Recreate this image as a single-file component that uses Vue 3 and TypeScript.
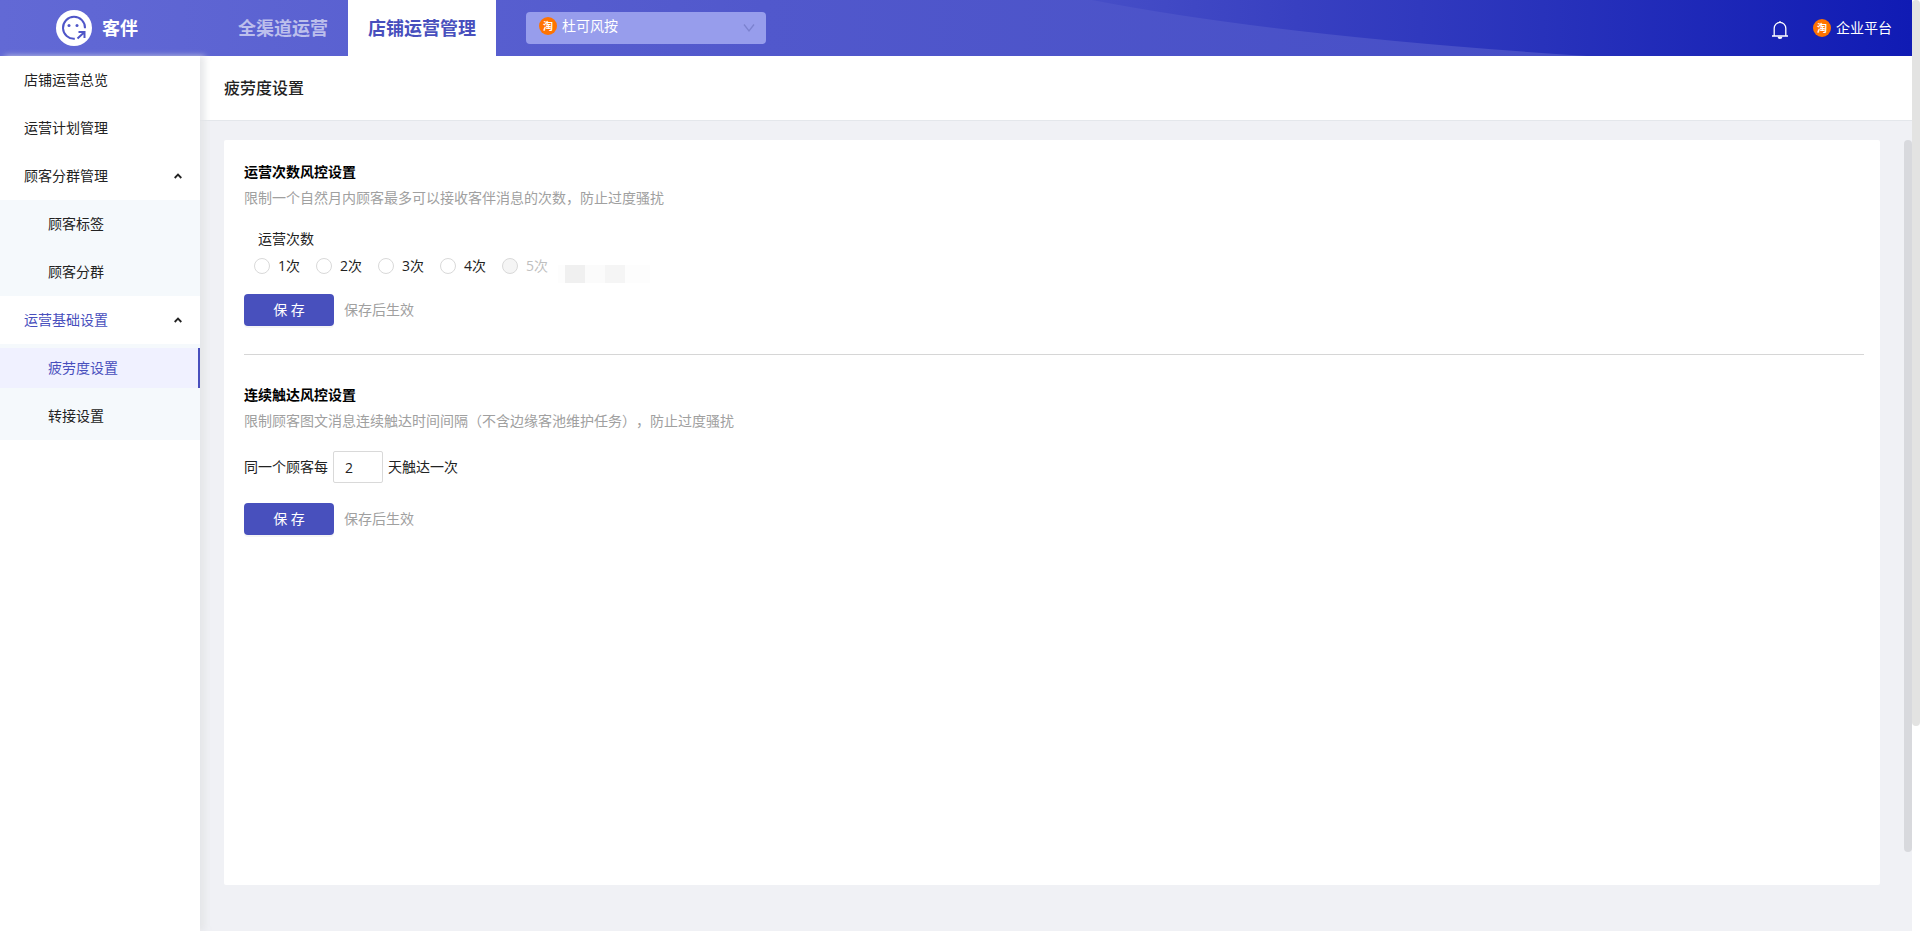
<script setup lang="ts">
import { ref } from 'vue'

interface MenuItem {
  label: string
  active?: boolean
  children?: MenuItem[]
}

const menu: MenuItem[] = [
  { label: '店铺运营总览' },
  { label: '运营计划管理' },
  { label: '顾客分群管理', children: [{ label: '顾客标签' }, { label: '顾客分群' }] },
  {
    label: '运营基础设置',
    active: true,
    children: [{ label: '疲劳度设置', active: true }, { label: '转接设置' }],
  },
]

const times = [1, 2, 3, 4, 5]
const maxTimes = ref<number | null>(null)
const days = ref('2')
const shop = ref('杜可风按')
</script>

<template>
  <div class="shell">
    <div class="app">
      <header class="header">
        <svg class="header-bg" viewBox="0 0 1912 56" preserveAspectRatio="none" aria-hidden="true">
          <defs>
            <linearGradient id="base" x1="0" x2="1" y1="0" y2="0">
              <stop offset="0" stop-color="#6269d5" />
              <stop offset="0.4" stop-color="#5158cc" />
              <stop offset="0.8" stop-color="#474fc6" />
              <stop offset="1" stop-color="#474fc6" />
            </linearGradient>
            <linearGradient id="wave" gradientUnits="userSpaceOnUse" x1="1092" x2="1912" y1="0" y2="0">
              <stop offset="0" stop-color="#464ec7" />
              <stop offset="0.25" stop-color="#3840c1" />
              <stop offset="0.55" stop-color="#2832bb" />
              <stop offset="1" stop-color="#101bb4" />
            </linearGradient>
          </defs>
          <rect width="1912" height="56" fill="url(#base)" />
          <path d="M1092 0Q1277 36 1587 56H1912V0Z" fill="url(#wave)" />
        </svg>
        <div class="brand">
          <svg width="36" height="36" viewBox="0 0 36 36" aria-hidden="true">
            <circle cx="18" cy="18" r="18" fill="#fff" />
            <path d="M18.8 28.8A11 11 0 1 1 29 18.2" fill="none" stroke="#4f56c8" stroke-width="2" />
            <circle cx="13" cy="15.5" r="1.5" fill="#4f56c8" />
            <circle cx="21" cy="15.5" r="1.5" fill="#4f56c8" />
            <path d="M21.5 28.5L28 22.5M22.5 22H28.5V28" fill="none" stroke="#4f56c8" stroke-width="2" />
          </svg>
          <span>客伴</span>
        </div>
        <nav class="tabs">
          <a class="tab" href="#">全渠道运营</a>
          <a class="tab tab-active" href="#">店铺运营管理</a>
        </nav>
        <div class="shop">
          <span class="tao">淘</span>
          <select v-model="shop" class="shop-select" aria-label="店铺">
            <option>杜可风按</option>
          </select>
          <svg class="shop-arrow" width="12" height="10" viewBox="0 0 12 10" aria-hidden="true">
            <path d="M1 1.5L6 8L11 1.5" fill="none" stroke="#7c82cf" stroke-width="1.3" />
          </svg>
        </div>
        <div class="account">
          <button class="bell" type="button" aria-label="通知">
            <svg width="18" height="20" viewBox="0 0 18 20" aria-hidden="true">
              <path d="M3.2 16V8.2a5.8 5.8 0 0 1 11.6 0V16M1 16H17M9 1V2.4" fill="none" stroke="#fff" stroke-width="1.3" />
              <path d="M6.6 16.8a2.4 2.2 0 0 0 4.8 0Z" fill="#fff" />
            </svg>
          </button>
          <a class="platform" href="#"><span class="tao">淘</span>企业平台</a>
        </div>
      </header>

      <div class="body">
        <aside class="sidebar">
          <ul class="menu">
            <li v-for="item in menu" :key="item.label">
              <a class="menu-item" :class="{ current: item.active }" href="#">
                {{ item.label }}
                <svg v-if="item.children" width="8" height="6" viewBox="0 0 8 6" aria-hidden="true">
                  <path d="M0.7 5L4 1.6L7.3 5" fill="none" stroke="#222" stroke-width="1.8" />
                </svg>
              </a>
              <ul v-if="item.children" class="submenu">
                <li v-for="child in item.children" :key="child.label">
                  <a class="submenu-item" :class="{ selected: child.active }" href="#">{{ child.label }}</a>
                </li>
              </ul>
            </li>
          </ul>
        </aside>

        <main class="main">
          <h1 class="page-title">疲劳度设置</h1>
          <div class="scroll">
            <div class="card">
              <form class="section" @submit.prevent>
                <h2>运营次数风控设置</h2>
                <p class="desc">限制一个自然月内顾客最多可以接收客伴消息的次数，防止过度骚扰</p>
                <fieldset class="times">
                  <legend>运营次数</legend>
                  <div class="radios">
                    <label v-for="n in times" :key="n" class="radio" :class="{ disabled: n === 5 }">
                      <input v-model="maxTimes" type="radio" name="times" :value="n" :disabled="n === 5" />
                      {{ n }}次
                    </label>
                    <span class="mosaic" aria-hidden="true"><i></i><i></i><i></i></span>
                  </div>
                </fieldset>
                <div class="actions">
                  <button class="save" type="submit">保 存</button>
                  <span>保存后生效</span>
                </div>
              </form>
              <hr />
              <form class="section" @submit.prevent>
                <h2>连续触达风控设置</h2>
                <p class="desc">限制顾客图文消息连续触达时间间隔（不含边缘客池维护任务），防止过度骚扰</p>
                <div class="interval">
                  <label for="days">同一个顾客每</label>
                  <input id="days" v-model="days" type="text" />
                  <span>天触达一次</span>
                </div>
                <div class="actions">
                  <button class="save" type="submit">保 存</button>
                  <span>保存后生效</span>
                </div>
              </form>
            </div>
            <div class="inner-bar" aria-hidden="true"><div class="inner-thumb"></div></div>
          </div>
        </main>
      </div>
    </div>
    <div class="outer-bar" aria-hidden="true"><div class="outer-thumb"></div></div>
  </div>
</template>

<style>
body {
  margin: 0;
}
</style>

<style scoped>
.shell,
.shell * {
  box-sizing: border-box;
}
.shell {
  display: flex;
  min-height: 100vh;
  background: #fff;
  color: #222;
  font: 14px/22px "Open Sans", "Noto Sans CJK SC", sans-serif;
  text-spacing-trim: space-all;
}
a {
  color: inherit;
  text-decoration: none;
}
ul {
  margin: 0;
  padding: 0;
  list-style: none;
}
button,
input,
select {
  font: inherit;
}
.app {
  flex: 1;
  min-width: 0;
  display: flex;
  flex-direction: column;
}
.header {
  position: relative;
  display: flex;
  height: 56px;
  color: #fff;
}
.header-bg {
  position: absolute;
  inset: 0;
  width: 100%;
  height: 100%;
}
.brand,
.tabs,
.shop,
.account {
  position: relative;
}
.brand {
  display: flex;
  align-items: center;
  gap: 10px;
  width: 218px;
  padding-left: 56px;
  font-size: 18px;
  font-weight: 700;
}
.tabs {
  display: flex;
}
.tab {
  padding: 0 20px;
  color: rgba(255, 255, 255, 0.6);
  font-size: 18px;
  font-weight: 700;
  line-height: 56px;
}
.tab-active {
  background: #fff;
  color: #484fbd;
}
.shop {
  display: flex;
  align-items: center;
  width: 240px;
  height: 32px;
  margin: 12px 0 0 30px;
  padding-left: 13px;
  border-radius: 4px;
  background: #979dec;
}
.tao {
  display: inline-block;
  flex: none;
  width: 18px;
  height: 18px;
  border-radius: 50%;
  background: #ff7300;
  color: #fff;
  font-size: 10px;
  font-weight: 700;
  line-height: 18px;
  text-align: center;
}
.shop .tao {
  margin-bottom: 4px;
}
.shop-select {
  position: absolute;
  inset: 0;
  width: 100%;
  padding: 0 32px 4px 36px;
  border: 0;
  background: none;
  color: #fff;
  appearance: none;
}
.shop-arrow {
  margin-left: auto;
  margin-right: 11px;
}
.account {
  display: flex;
  align-items: center;
  gap: 24px;
  margin-left: auto;
  padding-right: 20px;
}
.bell {
  display: flex;
  padding: 4px 0 0;
  border: 0;
  background: none;
}
.platform {
  display: flex;
  align-items: center;
  gap: 5px;
}
.body {
  flex: 1;
  display: flex;
}
.sidebar {
  position: relative;
  width: 200px;
  background: #fff;
  box-shadow: 5px 0 6px rgba(226, 227, 230, 0.8);
}
.menu-item {
  display: flex;
  align-items: center;
  justify-content: space-between;
  height: 48px;
  padding: 0 18px 0 24px;
}
.current,
.selected {
  color: #484fbd;
}
.submenu {
  background: #f5f9fc;
}
.submenu li {
  padding: 4px 0;
}
.submenu-item {
  display: block;
  padding-left: 48px;
  line-height: 40px;
}
.selected {
  border-right: 2px solid #484fbd;
  background: #f0f1ff;
}
.main {
  flex: 1;
  min-width: 0;
  display: flex;
  flex-direction: column;
  background: #f0f1f5;
}
.page-title {
  margin: 0;
  padding: 20px 24px;
  border-bottom: 1px solid #e4e7eb;
  background: #fff;
  font-size: 16px;
  font-weight: 500;
  line-height: 24px;
}
.scroll {
  flex: 1;
  display: flex;
  gap: 24px;
  padding: 19px 0 0 24px;
}
.card {
  flex: 1;
  margin-bottom: 46px;
  padding: 20px 16px 20px 20px;
  border-radius: 2px;
  background: #fff;
}
h2 {
  margin: 0;
  color: #000;
  font-size: 14px;
  font-weight: 700;
  line-height: 24px;
}
.desc {
  margin: 0 0 16px;
  color: #a0a0a0;
  line-height: 28px;
}
.times {
  margin: 0 0 16px;
  padding: 0 0 0 10px;
  border: 0;
}
legend {
  margin-bottom: 4px;
  padding: 0 4px;
}
.radios {
  display: flex;
  gap: 16px;
}
.radio {
  display: flex;
  align-items: center;
  gap: 8px;
  height: 24px;
}
.radio input {
  appearance: none;
  width: 16px;
  height: 16px;
  margin: 0;
  border: 1px solid #d9d9d9;
  border-radius: 50%;
  background: #fff;
}
.radio input:checked {
  border: 5px solid #484fbd;
}
.radio input:disabled {
  background: #f5f5f5;
}
.disabled {
  color: #bfbfbf;
}
.mosaic {
  display: flex;
  align-self: flex-end;
  width: 92px;
  height: 18px;
  margin: 0 0 -5px -6px;
  padding-left: 7px;
  background: #fdfdfd;
}
.mosaic i {
  width: 20px;
  background: #f0f0f0;
}
.mosaic i:nth-child(2) {
  background: #fbfbfb;
}
.mosaic i:nth-child(3) {
  background: #f5f5f5;
}
.actions {
  display: flex;
  align-items: center;
  gap: 10px;
  color: #a0a0a0;
}
.save {
  width: 90px;
  height: 32px;
  padding: 0;
  border: 0;
  border-radius: 4px;
  background: #4850bd;
  box-shadow: 0 2px 0 rgba(0, 0, 0, 0.04);
  color: #fff;
}
hr {
  height: 1px;
  margin: 28px 0;
  border: 0;
  background: #d6d6d6;
}
.interval {
  display: flex;
  align-items: center;
  gap: 5px;
  margin-bottom: 20px;
}
.interval input {
  width: 50px;
  height: 32px;
  padding: 0 11px;
  border: 1px solid #d9d9d9;
  border-radius: 2px;
  color: #222;
}
.inner-bar {
  width: 8px;
}
.inner-thumb {
  height: 90%;
  border-radius: 4px;
  background: #d8d9dd;
}
.outer-bar {
  width: 8px;
  height: 100vh;
}
.outer-thumb {
  height: 78%;
  border-radius: 4px;
  background: #e3e3e2;
}
</style>
